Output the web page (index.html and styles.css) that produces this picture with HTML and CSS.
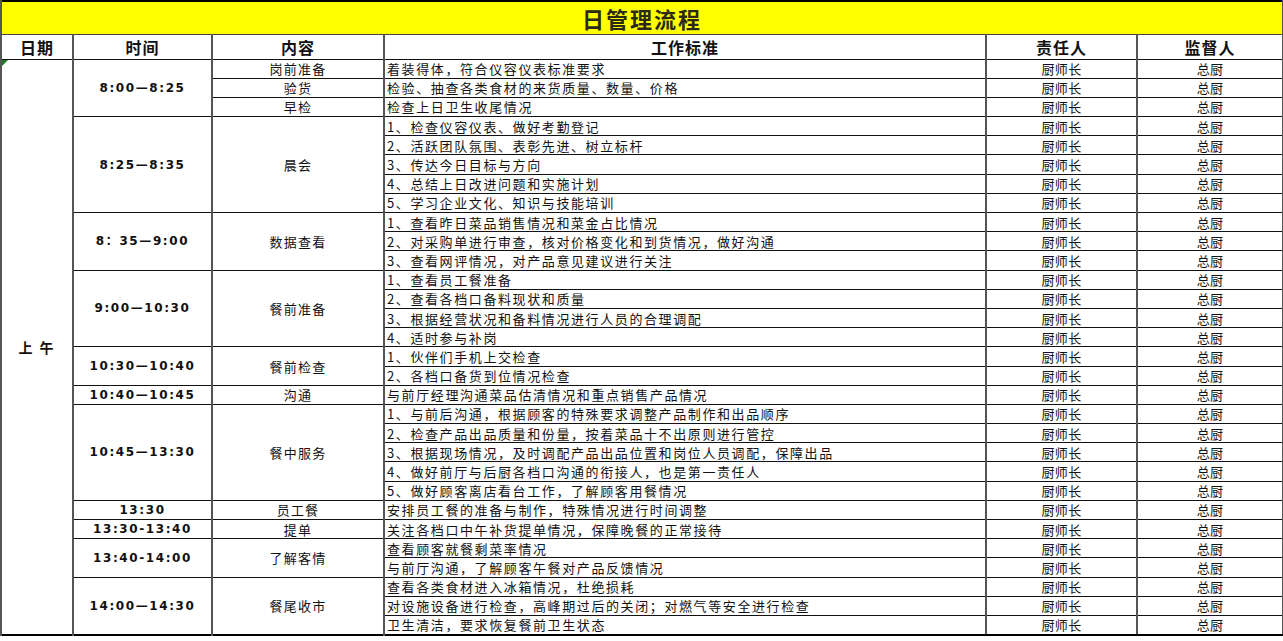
FILE: index.html
```html
<!DOCTYPE html>
<html lang="zh">
<head>
<meta charset="utf-8">
<title>日管理流程</title>
<link rel="stylesheet" href="styles.css">
</head>
<body>
<table class="sheet">
<colgroup>
<col class="c-date"><col class="c-time"><col class="c-item"><col class="c-std"><col class="c-resp"><col class="c-sup">
</colgroup>
<tr class="title-row"><td colspan="6" class="title">日管理流程</td></tr>
<tr class="head-row">
<th>日期</th><th>时间</th><th>内容</th><th>工作标准</th><th>责任人</th><th>监督人</th>
</tr>
<tr class="d"><td rowspan="30" class="date"><span class="flag"></span>上&nbsp;午</td><td rowspan="3" class="time">8:00—8:25</td><td class="item">岗前准备</td><td class="std">着装得体，符合仪容仪表标准要求</td><td class="p">厨师长</td><td class="p">总厨</td></tr>
<tr class="d"><td class="item">验货</td><td class="std">检验、抽查各类食材的来货质量、数量、价格</td><td class="p">厨师长</td><td class="p">总厨</td></tr>
<tr class="d"><td class="item">早检</td><td class="std">检查上日卫生收尾情况</td><td class="p">厨师长</td><td class="p">总厨</td></tr>
<tr class="d"><td rowspan="5" class="time">8:25—8:35</td><td rowspan="5" class="item">晨会</td><td class="std">1、检查仪容仪表、做好考勤登记</td><td class="p">厨师长</td><td class="p">总厨</td></tr>
<tr class="d"><td class="std">2、活跃团队氛围、表彰先进、树立标杆</td><td class="p">厨师长</td><td class="p">总厨</td></tr>
<tr class="d"><td class="std">3、传达今日目标与方向</td><td class="p">厨师长</td><td class="p">总厨</td></tr>
<tr class="d"><td class="std">4、总结上日改进问题和实施计划</td><td class="p">厨师长</td><td class="p">总厨</td></tr>
<tr class="d"><td class="std">5、学习企业文化、知识与技能培训</td><td class="p">厨师长</td><td class="p">总厨</td></tr>
<tr class="d"><td rowspan="3" class="time">8：35—9:00</td><td rowspan="3" class="item">数据查看</td><td class="std">1、查看昨日菜品销售情况和菜金占比情况</td><td class="p">厨师长</td><td class="p">总厨</td></tr>
<tr class="d"><td class="std">2、对采购单进行审查，核对价格变化和到货情况，做好沟通</td><td class="p">厨师长</td><td class="p">总厨</td></tr>
<tr class="d"><td class="std">3、查看网评情况，对产品意见建议进行关注</td><td class="p">厨师长</td><td class="p">总厨</td></tr>
<tr class="d"><td rowspan="4" class="time">9:00—10:30</td><td rowspan="4" class="item">餐前准备</td><td class="std">1、查看员工餐准备</td><td class="p">厨师长</td><td class="p">总厨</td></tr>
<tr class="d"><td class="std">2、查看各档口备料现状和质量</td><td class="p">厨师长</td><td class="p">总厨</td></tr>
<tr class="d"><td class="std">3、根据经营状况和备料情况进行人员的合理调配</td><td class="p">厨师长</td><td class="p">总厨</td></tr>
<tr class="d"><td class="std">4、适时参与补岗</td><td class="p">厨师长</td><td class="p">总厨</td></tr>
<tr class="d"><td rowspan="2" class="time">10:30—10:40</td><td rowspan="2" class="item">餐前检查</td><td class="std">1、伙伴们手机上交检查</td><td class="p">厨师长</td><td class="p">总厨</td></tr>
<tr class="d"><td class="std">2、各档口备货到位情况检查</td><td class="p">厨师长</td><td class="p">总厨</td></tr>
<tr class="d"><td class="time">10:40—10:45</td><td class="item">沟通</td><td class="std">与前厅经理沟通菜品估清情况和重点销售产品情况</td><td class="p">厨师长</td><td class="p">总厨</td></tr>
<tr class="d"><td rowspan="5" class="time">10:45—13:30</td><td rowspan="5" class="item">餐中服务</td><td class="std">1、与前后沟通，根据顾客的特殊要求调整产品制作和出品顺序</td><td class="p">厨师长</td><td class="p">总厨</td></tr>
<tr class="d"><td class="std">2、检查产品出品质量和份量，按着菜品十不出原则进行管控</td><td class="p">厨师长</td><td class="p">总厨</td></tr>
<tr class="d"><td class="std">3、根据现场情况，及时调配产品出品位置和岗位人员调配，保障出品</td><td class="p">厨师长</td><td class="p">总厨</td></tr>
<tr class="d"><td class="std">4、做好前厅与后厨各档口沟通的衔接人，也是第一责任人</td><td class="p">厨师长</td><td class="p">总厨</td></tr>
<tr class="d"><td class="std">5、做好顾客离店看台工作，了解顾客用餐情况</td><td class="p">厨师长</td><td class="p">总厨</td></tr>
<tr class="d"><td class="time">13:30</td><td class="item">员工餐</td><td class="std">安排员工餐的准备与制作，特殊情况进行时间调整</td><td class="p">厨师长</td><td class="p">总厨</td></tr>
<tr class="d"><td class="time">13:30-13:40</td><td class="item">提单</td><td class="std">关注各档口中午补货提单情况，保障晚餐的正常接待</td><td class="p">厨师长</td><td class="p">总厨</td></tr>
<tr class="d"><td rowspan="2" class="time">13:40-14:00</td><td rowspan="2" class="item">了解客情</td><td class="std">查看顾客就餐剩菜率情况</td><td class="p">厨师长</td><td class="p">总厨</td></tr>
<tr class="d"><td class="std">与前厅沟通，了解顾客午餐对产品反馈情况</td><td class="p">厨师长</td><td class="p">总厨</td></tr>
<tr class="d"><td rowspan="3" class="time">14:00—14:30</td><td rowspan="3" class="item">餐尾收市</td><td class="std">查看各类食材进入冰箱情况，杜绝损耗</td><td class="p">厨师长</td><td class="p">总厨</td></tr>
<tr class="d"><td class="std">对设施设备进行检查，高峰期过后的关闭；对燃气等安全进行检查</td><td class="p">厨师长</td><td class="p">总厨</td></tr>
<tr class="d"><td class="std">卫生清洁，要求恢复餐前卫生状态</td><td class="p">厨师长</td><td class="p">总厨</td></tr>
</table>
</body>
</html>
```
FILE: styles.css
```css
html, body {
  margin: 0;
  padding: 0;
  background: #ffffff;
}
body {
  font-family: "Noto Sans CJK SC", "Noto Sans", sans-serif;
  color: #111;
}
.sheet {
  width: 1282px;
  border-collapse: collapse;
  table-layout: fixed;
  border: 2px solid #000;
}
.c-date { width: 72px; }
.c-time { width: 139px; }
.c-item { width: 172px; }
.c-std { width: 602px; }
.c-resp { width: 151px; }
.c-sup { width: 146px; }

.sheet td, .sheet th {
  border-top: 1px solid #111;
  border-bottom: 1px solid #111;
  border-left: 2px solid #555;
  border-right: 2px solid #555;
  padding: 0;
  overflow: hidden;
  white-space: nowrap;
  line-height: 1;
}
.title-row { height: 33px; }
.title {
  background: #ffff00;
  text-align: center;
  font-size: 22px;
  font-weight: 700;
  letter-spacing: 2px;
  color: #2a2a16;
  border-bottom: 1px solid #444 !important;
}
.head-row { height: 25px; }
.head-row th {
  font-size: 16px;
  font-weight: 700;
  letter-spacing: 1px;
  color: #111;
  text-align: center;
}
.d { height: 19.2px; }
.sheet tr.d:last-child td { border-bottom: 2px solid #000; }
.date {
  position: relative;
  text-align: center;
  font-weight: 700;
  font-size: 14px;
  letter-spacing: 2px;
}
.flag {
  position: absolute;
  left: 0;
  top: 0;
  width: 0;
  height: 0;
  border-top: 6px solid #1e7a1e;
  border-right: 6px solid transparent;
}
.time {
  text-align: center;
  font-family: "DejaVu Sans", "Noto Sans CJK SC", sans-serif;
  font-weight: 700;
  font-size: 12px;
  letter-spacing: 1.6px;
}
.item {
  text-align: center;
  font-size: 13px;
  letter-spacing: 1.2px;
}
.std {
  text-align: left;
  padding-left: 2px !important;
  font-size: 13px;
  letter-spacing: 1.6px;
}
.p {
  text-align: center;
  font-size: 13px;
  letter-spacing: 0.3px;
}
```
